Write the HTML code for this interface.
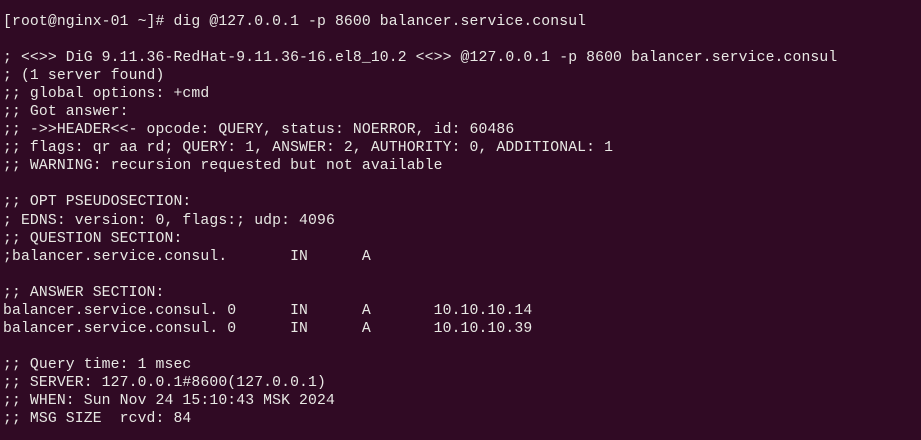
<!DOCTYPE html>
<html><head><style>
html,body{margin:0;padding:0;background:#300a24;width:921px;height:440px;overflow:hidden}
pre{margin:0;padding:13px 0 0 3px;font-family:"Liberation Mono",monospace;font-size:14.75px;letter-spacing:0.12px;line-height:18.05px;color:#e8e8e4;white-space:pre}
</style></head><body><pre>[root@nginx-01 ~]# dig @127.0.0.1 -p 8600 balancer.service.consul

; &lt;&lt;&gt;&gt; DiG 9.11.36-RedHat-9.11.36-16.el8_10.2 &lt;&lt;&gt;&gt; @127.0.0.1 -p 8600 balancer.service.consul
; (1 server found)
;; global options: +cmd
;; Got answer:
;; -&gt;&gt;HEADER&lt;&lt;- opcode: QUERY, status: NOERROR, id: 60486
;; flags: qr aa rd; QUERY: 1, ANSWER: 2, AUTHORITY: 0, ADDITIONAL: 1
;; WARNING: recursion requested but not available

;; OPT PSEUDOSECTION:
; EDNS: version: 0, flags:; udp: 4096
;; QUESTION SECTION:
;balancer.service.consul.       IN      A

;; ANSWER SECTION:
balancer.service.consul. 0      IN      A       10.10.10.14
balancer.service.consul. 0      IN      A       10.10.10.39

;; Query time: 1 msec
;; SERVER: 127.0.0.1#8600(127.0.0.1)
;; WHEN: Sun Nov 24 15:10:43 MSK 2024
;; MSG SIZE  rcvd: 84
</pre></body></html>
